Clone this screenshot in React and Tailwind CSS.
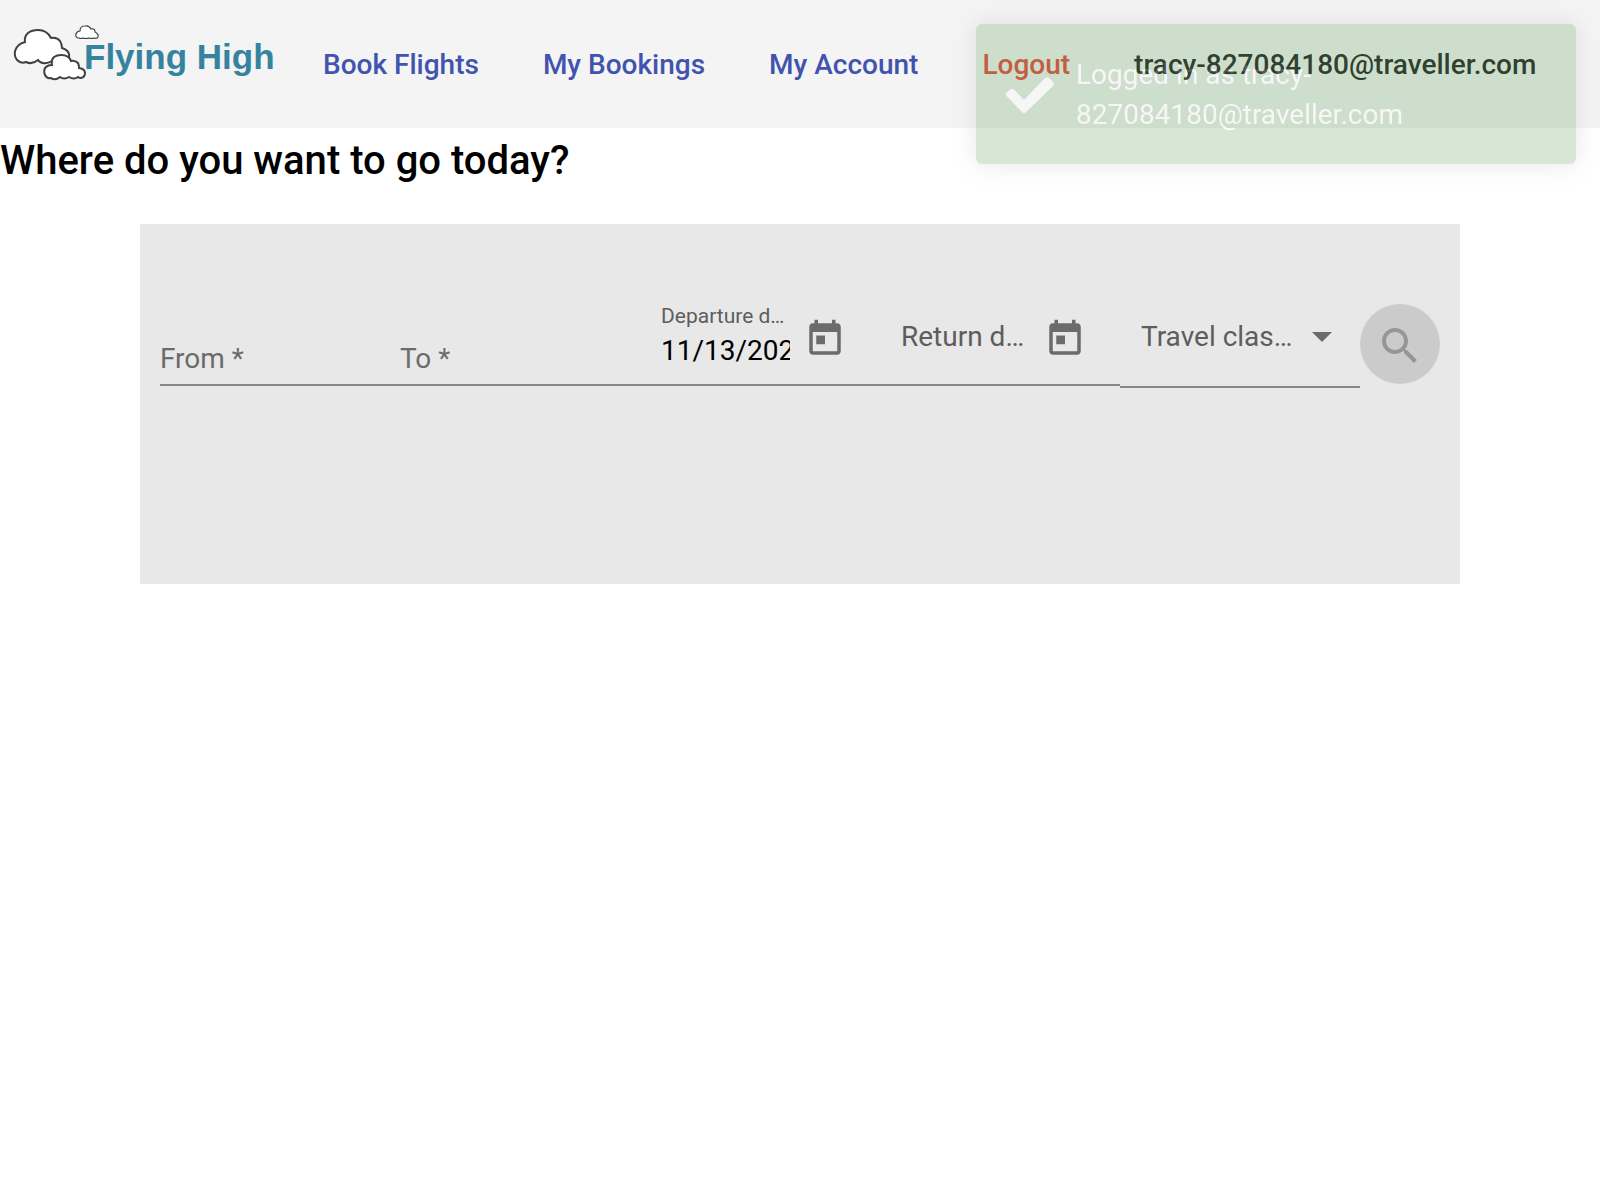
import React from "react";

const CALENDAR =
  "M19 3h-1V1h-2v2H8V1H6v2H5c-1.11 0-1.99.9-1.99 2L3 19c0 1.1.89 2 2 2h14c1.1 0 2-.9 2-2V5c0-1.1-.9-2-2-2zm0 16H5V8h14v11zM7 10h5v5H7z";

function Logo() {
  return (
    <a href="#home" className="flex h-20 w-[291px] shrink-0 items-start pl-3 pt-5" aria-label="Flying High home">
      <svg width="90" height="64" viewBox="0 0 90 64" className="-mr-[18px] shrink-0" fill="#fff" stroke="#404040" aria-hidden="true">
        <path
          strokeWidth="2"
          d="M14 42Q9 44 5 40Q2 36 3 31Q5 24 13 22Q12 17 16 13Q20 10 26 10Q35 10 39 18Q45 17 48 21Q50 24 50 28Q56 30 57 34Q58 39 54 42Q50 43 46 42Q43 44 40 41Q35 44 31 43Q27 42 26 40Q20 45 14 42Z"
        />
        <path
          strokeWidth="2"
          d="M39 58Q35 59 33 55Q31 50 34 47Q36 45 40 45Q39 40 42 37Q45 35 49 35Q57 35 59 41Q63 40 66 43Q67 45 67 48Q73 49 73 53Q73 57 69 58Q67 58 66 57Q62 60 57 57Q52 60 48 57Q43 61 39 58Z"
        />
        <path
          strokeWidth="1.2"
          d="M67 18Q63 18 64 14Q65 11 68 11Q68 6 73 6Q77 5 79 9Q83 8 83 12Q87 14 86 17Q85 19 82 18Q80 19 77 18Q74 19 71 18Q69 19 67 18Z"
        />
      </svg>
      <span className="pt-[17px] font-['Liberation_Sans',sans-serif] text-[35px] leading-10 font-bold whitespace-nowrap text-[#3683a0]">
        Flying High
      </span>
    </a>
  );
}

function DateField({ id, label, value, floated }) {
  return (
    <div className="flex h-[82px] min-w-0 border-b-2 border-[#868686] pl-[21px]">
      <div className="grid min-w-0 flex-1 content-start">
        <label
          htmlFor={id}
          className={
            floated
              ? "col-start-1 row-start-1 h-[31px] truncate text-[21px] leading-6 text-[#5d5d5d]"
              : "col-start-1 row-start-1 mt-[17px] h-8 truncate text-[28px] leading-8 text-[#5d5d5d]"
          }
        >
          {label}
        </label>
        <input
          id={id}
          type="text"
          defaultValue={value}
          className={
            floated
              ? "col-start-1 row-start-2 h-8 w-full min-w-0 bg-transparent text-[28px] leading-8 text-black outline-none"
              : "col-start-1 row-start-1 mt-[17px] h-8 w-full min-w-0 bg-transparent text-[28px] leading-8 text-black outline-none"
          }
        />
      </div>
      <button type="button" aria-label={"Open calendar for " + label} className="mr-5 flex h-[70px] w-[70px] shrink-0 items-center justify-center text-[#6b6b6b]">
        <svg width="42" height="42" viewBox="0 0 24 24" fill="currentColor" aria-hidden="true">
          <path d={CALENDAR} />
        </svg>
      </button>
    </div>
  );
}

function TextField({ id, label }) {
  return (
    <div className="grid h-[82px] min-w-0 content-start border-b-2 border-[#868686] pt-[39px]">
      <label htmlFor={id} className="pointer-events-none col-start-1 row-start-1 truncate text-[28px] leading-8 text-[#6b6b6b]">
        {label}
      </label>
      <input id={id} type="text" className="col-start-1 row-start-1 h-8 w-full min-w-0 bg-transparent text-[28px] leading-8 outline-none" />
    </div>
  );
}

const NAV_LINKS = ["Book Flights", "My Bookings", "My Account"];

export default function App() {
  return (
    <div className="min-h-screen bg-white font-[Roboto,sans-serif] text-black">
      <header className="flex h-32 items-start bg-[#f4f4f4]">
        <Logo />
        <nav className="flex h-32 items-center pt-0.5 whitespace-nowrap text-[28px] leading-8 font-medium text-[#4153af]">
          {NAV_LINKS.map((text) => (
            <a key={text} href="#nav" className="px-8">
              {text}
            </a>
          ))}
          <button type="button" className="px-8 text-[#e54d3d]">Logout</button>
          <span className="px-8 text-black/87">tracy-827084180@traveller.com</span>
        </nav>
      </header>

      <main>
        <h1 className="mb-[30px] text-[40px] leading-[66px] font-medium">Where do you want to go today?</h1>
        <form className="mx-[140px] flex min-h-[360px] items-start bg-[#e8e8e8] px-5 pt-20">
          <div className="grid min-w-0 flex-1 grid-cols-5 items-start">
            <TextField id="from" label="From *" />
            <TextField id="to" label="To *" />
            <DateField id="departure" label="Departure date" value="11/13/2023" floated />
            <DateField id="return" label="Return date" value="" />
            <div className="grid h-[84px] min-w-0 content-start border-b-2 border-[#868686] pt-[17px] pr-7 pl-[21px]">
              <div className="pointer-events-none col-start-1 row-start-1 flex min-w-0 items-center gap-4">
                <label htmlFor="travel-class" className="min-w-0 flex-1 truncate text-[28px] leading-8 text-[#5d5d5d]">
                  Travel class *
                </label>
                <svg width="20" height="10" viewBox="0 0 20 10" fill="#6b6b6b" className="shrink-0" aria-hidden="true">
                  <path d="M0 0h20L10 10z" />
                </svg>
              </div>
              <select id="travel-class" defaultValue="" className="col-start-1 row-start-1 h-8 w-full min-w-0 appearance-none bg-transparent text-[28px] outline-none">
                <option value=""></option>
              </select>
            </div>
          </div>
          <button
            type="submit"
            disabled
            aria-label="Search flights"
            className="flex size-20 shrink-0 items-center justify-center rounded-full bg-[#cbcbcb] pt-1 text-[#969696]"
          >
            <svg width="48" height="48" viewBox="0 0 24 24" fill="currentColor" aria-hidden="true">
              <path d="M15.5 14h-.79l-.28-.27C15.41 12.59 16 11.11 16 9.5 16 5.91 13.09 3 9.5 3S3 5.91 3 9.5 5.91 16 9.5 16c1.61 0 3.09-.59 4.23-1.57l.27.28v.79l5 4.99L20.49 19l-4.99-5zm-6 0C7.01 14 5 11.99 5 9.5S7.01 5 9.5 5 14 7.01 14 9.5 11.99 14 9.5 14z" />
            </svg>
          </button>
        </form>
      </main>

      <div
        role="status"
        className="pointer-events-none fixed top-6 right-6 flex w-[600px] items-center gap-[22px] rounded-md bg-[#549b4f] px-[30px] pt-[31px] pb-[29px] text-[28px] leading-10 text-white opacity-24 shadow-[0_0_24px_#999]"
      >
        <svg width="48" height="36" viewBox="0 0 48 36" fill="#fff" className="shrink-0" aria-hidden="true">
          <path d="M0.500 19Q-0.500 17.500 0.500 16L4 12.500Q6 11 8 12.500L18 23L39 1Q41 -0.500 43 1L47 5Q48.500 7 47 9L20 35Q18 37 16 35Z" />
        </svg>
        <p className="min-w-0 flex-1">Logged in as tracy-827084180@traveller.com</p>
      </div>
    </div>
  );
}
